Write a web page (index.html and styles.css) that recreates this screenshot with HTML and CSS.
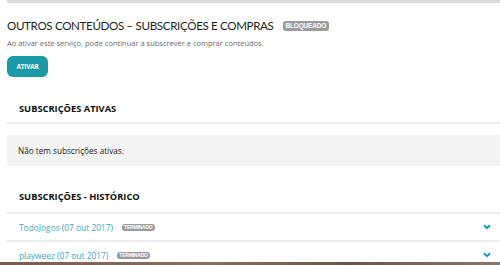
FILE: index.html
```html
<!DOCTYPE html>
<html lang="pt">
<head>
<meta charset="utf-8">
<link rel="stylesheet" href="styles.css">
</head>
<body>
<div class="page">
  <div class="topbar"></div>
  <h1 class="title">OUTROS CONTEÚDOS – SUBSCRIÇÕES E COMPRAS <span class="badge badge-lg">BLOQUEADO</span></h1>
  <p class="subtitle">Ao ativar este serviço, pode continuar a subscrever e comprar conteúdos.</p>
  <button class="btn">ATIVAR</button>

  <h2 class="section-head section-active">SUBSCRIÇÕES ATIVAS</h2>
  <div class="empty">Não tem subscrições ativas.</div>

  <h2 class="section-head section-history">SUBSCRIÇÕES - HISTÓRICO</h2>
  <div class="row">
    <span class="row-name">TodoJogos (07 out 2017)</span>
    <span class="badge badge-sm">TERMINADO</span>
    <svg class="chev" viewBox="0 0 8 6" width="8" height="6"><path d="M1 1.2 L4 4.2 L7 1.2" fill="none" stroke="#1a9bb0" stroke-width="2"/></svg>
  </div>
  <div class="row">
    <span class="row-name">playweez (07 out 2017)</span>
    <span class="badge badge-sm">TERMINADO</span>
    <svg class="chev" viewBox="0 0 8 6" width="8" height="6"><path d="M1 1.2 L4 4.2 L7 1.2" fill="none" stroke="#1a9bb0" stroke-width="2"/></svg>
  </div>
</div>
<div class="bottom-band"></div>
</body>
</html>
```
FILE: styles.css
```css
html, body {
  margin: 0;
  padding: 0;
  background: #fff;
  overflow: hidden;
}
body {
  width: 500px;
  height: 265px;
  position: relative;
  font-family: "Open Sans", "Liberation Sans", sans-serif;
  color: #222;
}
.page {
  padding-left: 7px;
}
.topbar {
  height: 3px;
  background: #d9d9d9;
}
.title {
  margin: 13px 0 0 0;
  font-family: Lato, "Open Sans", sans-serif;
  font-size: 11.6px;
  letter-spacing: -0.35px;
  line-height: 20px;
  font-weight: 400;
  color: #1e1e1e;
  white-space: nowrap;
  display: flex;
  align-items: center;
}
.badge {
  display: inline-block;
  background: #9b9b9b;
  color: #fff;
  font-weight: 700;
  border-radius: 3px;
  font-family: "Liberation Sans", sans-serif;
  letter-spacing: -0.2px;
}
.badge-lg {
  font-size: 6.5px;
  line-height: 10px;
  padding: 0 3px;
  margin-left: 9px;
}
.subtitle {
  margin: 1px 0 0 0;
  font-size: 7.5px;
  line-height: 12px;
  color: #6a6a6a;
}
.btn {
  display: block;
  margin-top: 7px;
  width: 41px;
  height: 21px;
  padding: 0;
  border: 0;
  border-radius: 6px;
  background: #1a99a7;
  color: #fff;
  font-family: "Open Sans", sans-serif;
  font-weight: 700;
  font-size: 6.5px;
  letter-spacing: -0.2px;
}
.section-head {
  margin: 0;
  padding-left: 12px;
  font-size: 9.3px;
  font-weight: 700;
  line-height: 14px;
  color: #111;
  border-bottom: 2px solid #ececec;
}
.section-active {
  margin-top: 25px;
  padding-bottom: 6px;
}
.section-history {
  margin-top: 24px;
  padding-bottom: 8px;
}
.empty {
  margin-top: 11px;
  height: 31px;
  background: #f4f4f4;
  padding-left: 11px;
  display: flex;
  align-items: center;
  font-size: 8.2px;
  color: #222;
}
.row {
  height: 26px;
  display: flex;
  align-items: center;
  padding-left: 12px;
  padding-right: 9px;
  border-bottom: 2px solid #ececec;
}
.row-name {
  font-size: 8.4px;
  color: #3aa7c0;
}
.badge-sm {
  font-size: 5px;
  line-height: 7px;
  padding: 0 2px;
  margin-left: 9px;
}
.chev {
  margin-left: auto;
}
.bottom-band {
  position: absolute;
  left: 0;
  right: 0;
  bottom: 0;
  height: 3px;
  background: linear-gradient(90deg, #7b5b4c, #8c6f5e 40%, #6d5545 70%, #8e7766);
}
```
